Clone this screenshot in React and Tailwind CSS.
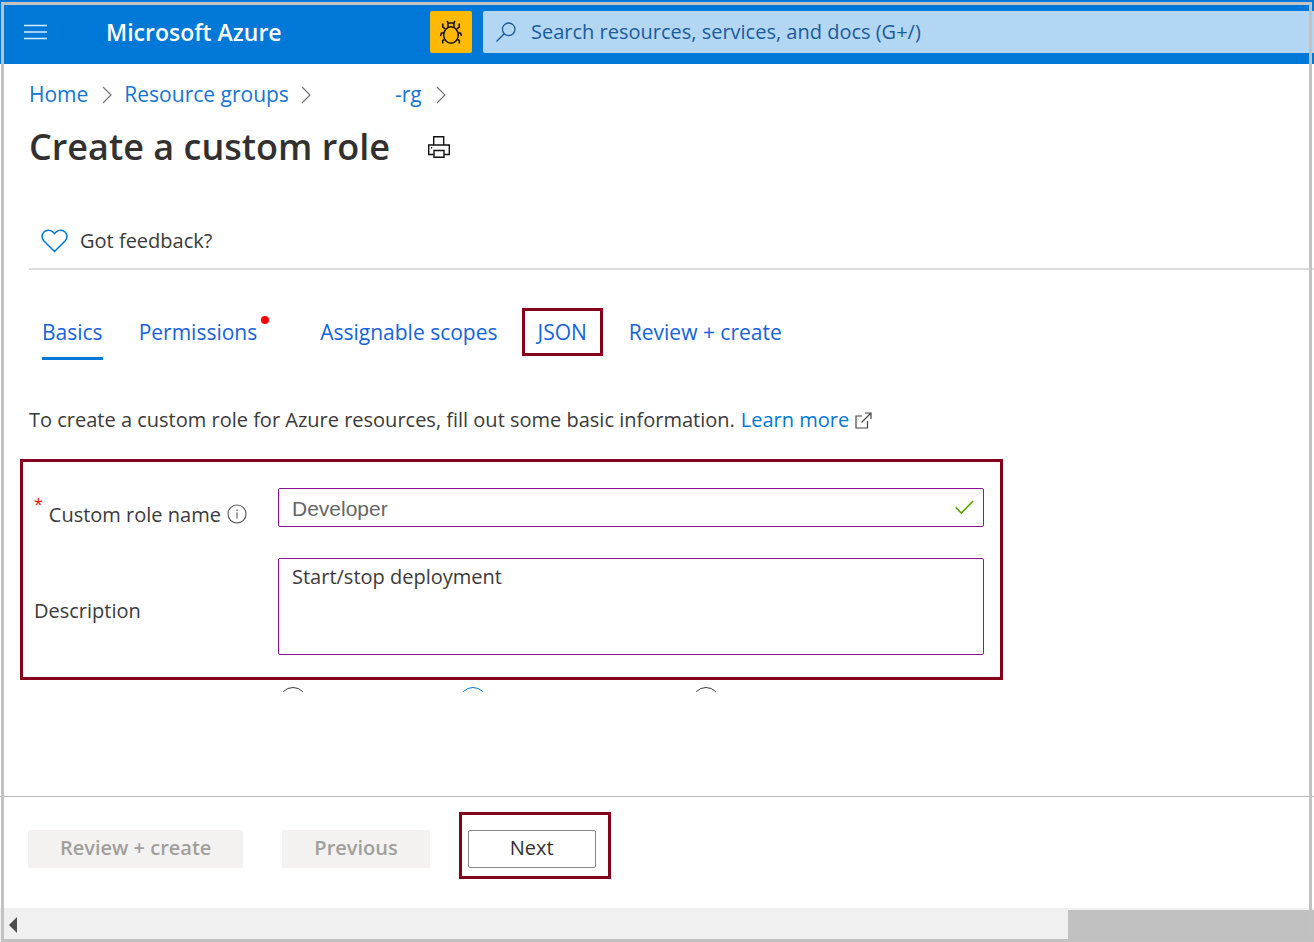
const link = "text-[#1475d4] hover:underline";
const tab = "text-[#1563dc] whitespace-nowrap";

function Chevron() {
  return (
    <svg className="shrink-0" width="10" height="18" viewBox="0 0 10 18" fill="none" stroke="#767676" strokeWidth="1.2" aria-hidden="true">
      <path d="M1 1l8 8-8 8" />
    </svg>
  );
}

function BugIcon() {
  return (
    <svg width="24" height="26" viewBox="0 0 24 26" fill="none" stroke="#111" strokeWidth="1.5" aria-hidden="true">
      <ellipse cx="12" cy="16" rx="7.3" ry="8.3" />
      <path d="M9 8V4h6v4M9.500 4.500L8 2M14.500 4.500L16 2M6.200 9.800L3.800 8V4.500M17.800 9.800L20.200 8V4.500M4.700 14H2.500L1.500 17M19.300 14h2.200l1 3M5.500 20.500L3.700 21.500v3M18.500 20.500l1.800 1v3" />
    </svg>
  );
}

function Header() {
  return (
    <header className="flex h-16 items-center bg-[#0078d7] pl-6">
      <button type="button" aria-label="Show portal menu" className="shrink-0">
        <svg width="23" height="16" viewBox="0 0 23 16" stroke="#d9ebf9" strokeWidth="1.4" aria-hidden="true">
          <path d="M0 1.5h23M0 8h23M0 14.500h23" />
        </svg>
      </button>
      <a href="#home" className="ml-[59px] w-[324px] shrink-0 text-[23px] leading-8 font-semibold text-white">
        Microsoft Azure
      </a>
      <button type="button" aria-label="Report a bug" className="flex size-[42px] shrink-0 items-center justify-center rounded-xs bg-[#ffb900]">
        <BugIcon />
      </button>
      <label className="ml-[11px] flex h-[42px] min-w-0 flex-1 items-center gap-[15px] rounded-l-xs bg-[#b3d6f2] pl-[13px]">
        <svg className="shrink-0" width="20" height="20" viewBox="0 0 20 20" fill="none" stroke="#1a5c9c" strokeWidth="1.3" aria-hidden="true">
          <circle cx="12.700" cy="7.300" r="6.300" />
          <path d="M8.200 11.800L.5 19.500" />
        </svg>
        <input
          type="text"
          aria-label="Search resources, services, and docs"
          placeholder="Search resources, services, and docs (G+/)"
          className="min-w-0 flex-1 bg-transparent text-xl text-[#1a5c9c] outline-none placeholder:text-[#1a5c9c]"
        />
      </label>
    </header>
  );
}

function Tabs() {
  return (
    <nav aria-label="Custom role steps" className="mt-[38px] flex h-12 items-center pl-[13px] text-[21px] leading-7">
      <a href="#basics" aria-current="page" className={`${tab} relative mr-9 after:absolute after:inset-x-0 after:-bottom-3.5 after:h-[3px] after:bg-[#0078d7]`}>
        Basics
      </a>
      <a href="#permissions" className={`${tab} relative mr-[63px]`}>
        Permissions
        <span className="absolute -top-0.5 -right-3 size-2 rounded-full bg-[#ff0000]" />
      </a>
      <a href="#scopes" className={`${tab} mr-6`}>Assignable scopes</a>
      <a href="#json" className={`${tab} mr-[26px] flex h-12 items-center border-3 border-[#85001a] px-[13px]`}>JSON</a>
      <a href="#review" className={tab}>Review + create</a>
    </nav>
  );
}

function RoleForm() {
  const field = "w-full rounded-xs border border-[#881798] bg-white px-[13px] outline-none";
  return (
    <section className="mt-[25px] ml-5 grid w-[983px] max-w-full grid-cols-[244px_1fr] gap-y-[29px] border-3 border-[#85001a] py-[26px] pr-4 pb-[22px] pl-[11px] text-xl text-[#3b3a39]">
      <div className="flex items-start gap-1.5 pt-1">
        <span className="text-base leading-6 text-[#ff0000]">*</span>
        <label htmlFor="role-name" className="pt-[9px] leading-7">Custom role name</label>
        <svg className="mt-3 shrink-0" width="20" height="20" viewBox="0 0 20 20" fill="none" stroke="#555" strokeWidth="1.1" aria-hidden="true">
          <circle cx="10" cy="10" r="9" />
          <path d="M10 8.500v6M10 5.500v1.500" />
        </svg>
      </div>
      <div className="relative">
        <input id="role-name" type="text" defaultValue="Developer" className={`${field} block h-[39px] pt-0.5 font-['Liberation_Sans',sans-serif] text-[21px] text-[#666]`} />
        <svg className="absolute top-3 right-2.5" width="19" height="15" viewBox="0 0 19 15" fill="none" stroke="#57a300" strokeWidth="1.600" aria-hidden="true">
          <path d="M.7 7.300l5.600 5.800L18.200 1" />
        </svg>
      </div>
      <label htmlFor="role-description" className="self-center pt-2 leading-7">Description</label>
      <textarea id="role-description" defaultValue="Start/stop deployment" className={`${field} block h-[97px] resize-none py-1 leading-7`} />
    </section>
  );
}

function BaselineOptions() {
  const radio = "size-[28px] shrink-0 appearance-none rounded-full border";
  return (
    <div role="radiogroup" aria-label="Baseline permissions" className="mt-[7px] flex h-[5px] items-start overflow-hidden pl-[279px]">
      <input type="radio" name="baseline" aria-label="Clone a role" className={`${radio} mr-[152px] border-[#3b3a39]`} />
      <input type="radio" name="baseline" aria-label="Start from scratch" defaultChecked className={`${radio} mr-[205px] border-[#0078d7]`} />
      <input type="radio" name="baseline" aria-label="Start from JSON" className={`${radio} border-[#3b3a39]`} />
    </div>
  );
}

export default function App() {
  const disabled = "mt-[18px] h-[38px] rounded-xs bg-[#f3f2f1] px-8 pb-0.5 text-[#a19f9d]";
  return (
    <div className="relative flex min-h-screen flex-col overflow-hidden bg-white font-['Open_Sans','Noto_Sans',sans-serif]">
      <Header />
      <main className="flex-1">
        <div className="pt-[17px] pl-[29px]">
          <nav aria-label="Breadcrumb" className="flex h-7 items-center text-[21px]">
            <a href="#home" className={link}>Home</a>
            <span className="mr-3 ml-[14px]"><Chevron /></span>
            <a href="#groups" className={link}>Resource groups</a>
            <span className="mr-[84px] ml-3"><Chevron /></span>
            <a href="#rg" className={link}>-rg</a>
            <span className="ml-3.5"><Chevron /></span>
          </nav>
          <div className="mt-3 flex items-center gap-[38px]">
            <h1 className="text-4xl leading-[52px] font-semibold text-[#323130]">Create a custom role</h1>
            <button type="button" aria-label="Print">
              <svg width="22" height="22" viewBox="0 0 22 22" fill="none" stroke="#111" strokeWidth="1.400" aria-hidden="true">
                <path d="M5.700 9V.7h10V9M5.700 18.500H.7V9h20.600v9.500h-5M6 14.500h10v6.800H6zM3 11.800h1.200" />
              </svg>
            </button>
          </div>
          <div className="mt-10 flex h-[57px] items-center border-b-2 border-[#dcdcdc] pl-3">
            <button type="button" className="flex items-center gap-3 text-xl text-[#3b3a39]">
              <svg width="27" height="24" viewBox="0 0 27 24" fill="none" stroke="#0078d7" strokeWidth="1.500" aria-hidden="true">
                <path d="M13.500 22.500L2.700 11.700a6.300 6.300 0 0 1 8.900-8.900l1.900 1.900 1.900-1.900a6.300 6.300 0 0 1 8.900 8.900z" />
              </svg>
              Got feedback?
            </button>
          </div>
          <Tabs />
          <p className="mt-[50px] flex items-center text-xl leading-7 text-[#3b3a39]">
            To create a custom role for Azure resources, fill out some basic information.
            <a href="#learn" className="ml-1.5 flex items-center gap-1.5 text-[#0078d7]">
              Learn more
              <svg width="17" height="17" viewBox="0 0 17 17" fill="none" stroke="#444" strokeWidth="1.200" aria-hidden="true">
                <path d="M7 4H1v12h11.500V9M6.500 10.500L16 1M10 1h6v6" />
              </svg>
            </a>
          </p>
        </div>
        <RoleForm />
        <BaselineOptions />
      </main>
      <footer className="flex h-28 items-start border-t border-[#b8b8b8] pt-[15px] pl-7 text-xl font-semibold">
        <button type="button" disabled className={`${disabled} mr-[39px]`}>Review + create</button>
        <button type="button" disabled className={`${disabled} mr-[29px]`}>Previous</button>
        <div className="border-3 border-[#85001a] pt-[15px] pr-3 pb-2 pl-1.5">
          <button type="button" className="block h-[38px] w-32 rounded-xs border border-[#8a8886] pb-0.5 font-medium text-[#323130]">Next</button>
        </div>
      </footer>
      <div className="flex h-[34px] items-center bg-[#f0f0f0] pl-[9px]">
        <button type="button" aria-label="Scroll left">
          <svg width="8" height="16" viewBox="0 0 8 16" fill="#4d4d4d" aria-hidden="true">
            <path d="M8 0v16L0 8z" />
          </svg>
        </button>
        <div className="mt-0.5 ml-auto h-8 w-[246px] bg-[#c1c1c1]" />
      </div>
      <div className="pointer-events-none absolute top-0.5 right-0.5 bottom-0 left-px border-3 border-[#c2c2c2]" />
    </div>
  );
}
